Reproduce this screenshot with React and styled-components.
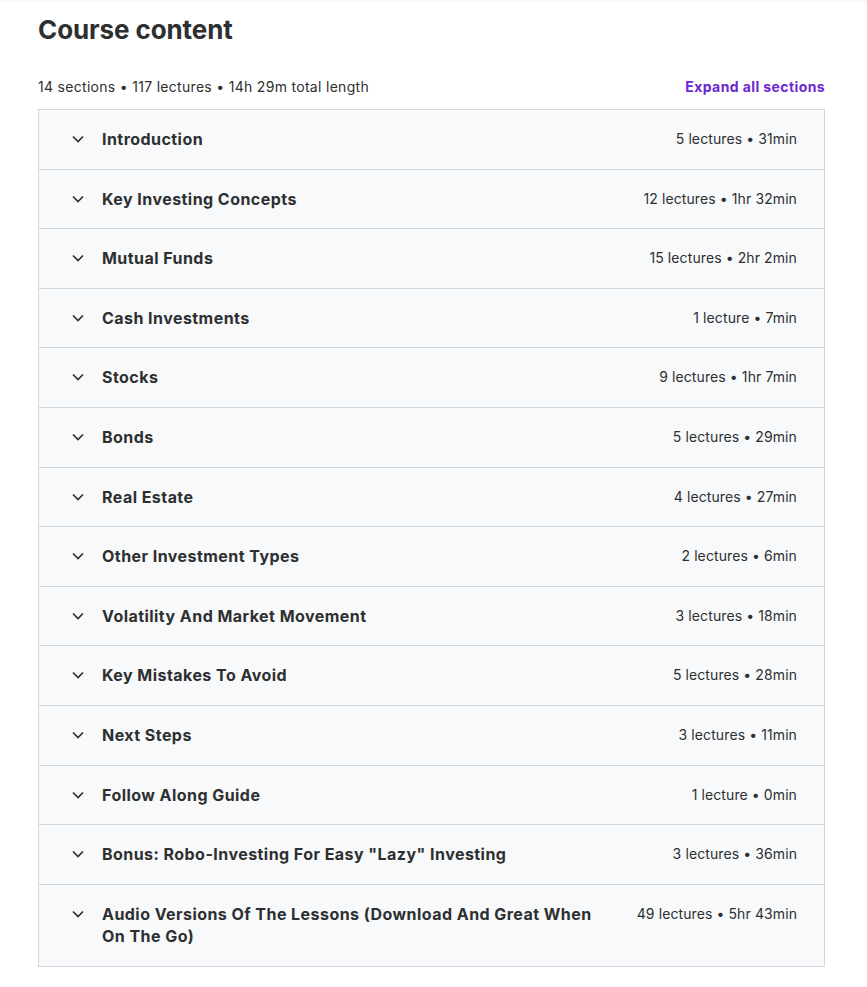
import React, { useState } from 'react';
import styled, { createGlobalStyle } from 'styled-components';

const GlobalStyle = createGlobalStyle`
  body {
    margin: 0;
    background: #ffffff;
    font-family: Inter, "Noto Sans", "Liberation Sans", sans-serif;
    color: #2d2f31;
  }
`;

const TopFade = styled.div`
  height: 4px;
  background: linear-gradient(#f5f6f7, #ffffff);
`;

const Page = styled.div`
  padding: 10px 42px 20px 38px;
`;

const Title = styled.h2`
  margin: 0;
  font-size: 26px;
  font-weight: 700;
  letter-spacing: -0.1px;
  line-height: 32px;
`;

const InfoBar = styled.div`
  display: flex;
  justify-content: space-between;
  align-items: center;
  margin-top: 31px;
  margin-bottom: 12px;
  font-size: 14px;
  line-height: 20px;
`;

const Summary = styled.span`
  color: #2d2f31;
  letter-spacing: 0.3px;
`;

const ExpandLink = styled.button`
  border: none;
  background: none;
  padding: 0;
  font: inherit;
  font-weight: 700;
  letter-spacing: 0.4px;
  color: #6d28d2;
  cursor: pointer;
`;

const Accordion = styled.div`
  border: 1px solid #d1d7dc;
  border-bottom: none;
`;

const Row = styled.div`
  display: flex;
  align-items: flex-start;
  gap: 18px;
  padding: 18px 27px 18px 33px;
  background: #f7f9fa;
  border-bottom: 1px solid #d1d7dc;
  cursor: pointer;
`;

const Chevron = styled.svg`
  flex: none;
  width: 12px;
  height: 22px;
  transform: ${(p) => (p.$open ? 'rotate(180deg)' : 'none')};
`;

const SectionTitle = styled.span`
  flex: 1;
  font-size: 16px;
  font-weight: 700;
  letter-spacing: 0.45px;
  line-height: 22.6px;
  padding-right: 16px;
`;

const Meta = styled.span`
  flex: none;
  font-size: 14px;
  line-height: 22.6px;
  letter-spacing: 0.1px;
  color: #2d2f31;
`;

const sections = [
  ['Introduction', '5 lectures • 31min'],
  ['Key Investing Concepts', '12 lectures • 1hr 32min'],
  ['Mutual Funds', '15 lectures • 2hr 2min'],
  ['Cash Investments', '1 lecture • 7min'],
  ['Stocks', '9 lectures • 1hr 7min'],
  ['Bonds', '5 lectures • 29min'],
  ['Real Estate', '4 lectures • 27min'],
  ['Other Investment Types', '2 lectures • 6min'],
  ['Volatility And Market Movement', '3 lectures • 18min'],
  ['Key Mistakes To Avoid', '5 lectures • 28min'],
  ['Next Steps', '3 lectures • 11min'],
  ['Follow Along Guide', '1 lecture • 0min'],
  ['Bonus: Robo-Investing For Easy "Lazy" Investing', '3 lectures • 36min'],
  ['Audio Versions Of The Lessons (Download And Great When On The Go)', '49 lectures • 5hr 43min'],
];

const App = () => {
  const [open, setOpen] = useState({});

  const toggle = (i) => setOpen({ ...open, [i]: !open[i] });

  return (
    <>
      <GlobalStyle />
      <TopFade />
      <Page>
        <Title>Course content</Title>
        <InfoBar>
          <Summary>14 sections • 117 lectures • 14h 29m total length</Summary>
          <ExpandLink type="button">Expand all sections</ExpandLink>
        </InfoBar>
        <Accordion>
          {sections.map(([title, meta], i) => (
            <Row key={title} onClick={() => toggle(i)}>
              <Chevron viewBox="0 0 12 22" $open={open[i]}>
                <path d="M1 8.5 L6 13.5 L11 8.5" fill="none" stroke="#2d2f31" strokeWidth="1.7" />
              </Chevron>
              <SectionTitle>{title}</SectionTitle>
              <Meta>{meta}</Meta>
            </Row>
          ))}
        </Accordion>
      </Page>
    </>
  );
};

export default App;
